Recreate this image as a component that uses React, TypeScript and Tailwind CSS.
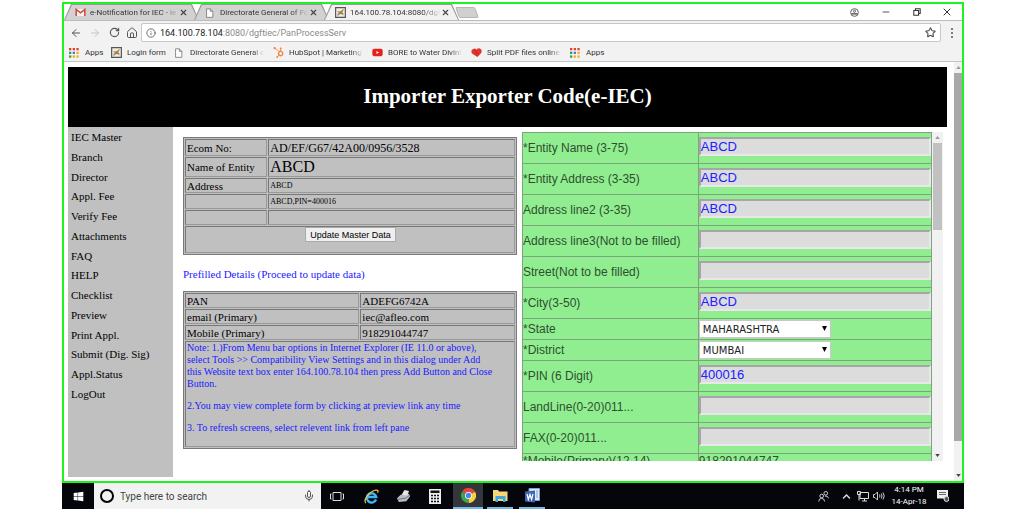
import type { ReactNode } from "react";
import { LuArrowLeft, LuArrowRight, LuRotateCw, LuHouse, LuInfo, LuStar, LuMic, LuX, LuMinus } from "react-icons/lu";
import { FaHubspot, FaYoutube, FaWindows, FaChevronUp } from "react-icons/fa";

const MENU = [
  "IEC Master", "Branch", "Director", "Appl. Fee", "Verify Fee", "Attachments", "FAQ",
  "HELP", "Checklist", "Preview", "Print Appl.", "Submit (Dig. Sig)", "Appl.Status", "LogOut",
];

const CELL = "border border-t-[#777] border-l-[#777] border-r-[#999] border-b-[#999] pl-px text-left font-normal";
const GREY_TABLE = "w-full table-fixed border-separate border-spacing-px border border-[#7a7a7a] bg-[#c0c0c0] text-black";

type Field = { id: string; label: string; value?: string; kind?: "select" };

const FIELDS: Field[] = [
  { id: "name", label: "*Entity Name (3-75)", value: "ABCD" },
  { id: "addr1", label: "*Entity Address (3-35)", value: "ABCD" },
  { id: "addr2", label: "Address line2 (3-35)", value: "ABCD" },
  { id: "addr3", label: "Address line3(Not to be filled)" },
  { id: "street", label: "Street(Not to be filled)" },
  { id: "city", label: "*City(3-50)", value: "ABCD" },
  { id: "state", label: "*State", value: "MAHARASHTRA", kind: "select" },
  { id: "district", label: "*District", value: "MUMBAI", kind: "select" },
  { id: "pin", label: "*PIN (6 Digit)", value: "400016" },
  { id: "landline", label: "LandLine(0-20)011..." },
  { id: "fax", label: "FAX(0-20)011..." },
];

function GmailIcon() {
  return (
    <svg viewBox="0 0 12 10" className="h-[9px] w-[11px]">
      <path d="M1 1h10v8H1z" fill="#f3f3f3" />
      <path d="M1.2 9V1.6L6 5.4l4.8-3.8V9" fill="none" stroke="#d8453a" strokeWidth="1.7" />
    </svg>
  );
}

function PageIcon() {
  return (
    <svg viewBox="0 0 10 12" className="h-[10px] w-[9px]">
      <path d="M1.5 1h4.5l3 3v7.2H1.5z" fill="#fff" stroke="#777" />
      <path d="M6 1v3h3" fill="none" stroke="#777" />
    </svg>
  );
}

function EmblemIcon() {
  return (
    <svg viewBox="0 0 12 12" className="h-[11px] w-[11px]">
      <path d="M.7.7h10.6v10.6H.7z" fill="#eee" stroke="#555" strokeWidth="1.3" />
      <path d="M2 9l2-3-2-2 3 1 5-3-2 4 2 2-4-1z" fill="#b98a2a" />
      <path d="M3 9.5l3-3 3 2" fill="none" stroke="#555" strokeWidth=".8" />
    </svg>
  );
}

function AppsIcon() {
  const colors = ["#e8402f", "#e8402f", "#e8402f", "#2ca24c", "#3f7de0", "#f2b01e", "#2ca24c", "#f2b01e", "#f2b01e"];
  return (
    <svg viewBox="0 0 10 10" className="h-[10px] w-[10px]">
      {colors.map((c, i) => (
        <rect key={i} x={(i % 3) * 3.7} y={Math.floor(i / 3) * 3.7} width="2.3" height="2.3" fill={c} />
      ))}
    </svg>
  );
}

function HeartIcon() {
  return (
    <svg viewBox="0 0 12 10" className="h-[9px] w-[11px]">
      <path d="M7 10L1 6Q-1 2 2.500 1Q5 0 6 2Q8-1 11 1.500Q13 4 10 7z" fill="#e2352f" />
      <path d="M4 2l3 5" stroke="#b3201d" />
    </svg>
  );
}

function Tab({ icon, title, active }: { icon: ReactNode; title: string; active?: boolean }) {
  const shape = "[clip-path:polygon(0_100%,7px_0,calc(100%-7px)_0,100%_100%)]";
  return (
    <div className={`-mr-[5px] w-[135px] bg-[#9a9a9a] px-px pt-px ${shape}`}>
      <div className={`flex h-full items-center px-[10px] ${shape} ${active ? "bg-[#f2f2f2]" : "bg-[#d2d2d2]"}`}>
        <span className="flex w-[15px] shrink-0">{icon}</span>
        <span className="flex-1 text-[8px] leading-3 whitespace-nowrap [mask-image:linear-gradient(to_right,black_80%,transparent)]">
          {title}
        </span>
        <button aria-label="Close tab" className="shrink-0 text-[#444]"><LuX size={9} strokeWidth={3} /></button>
      </div>
    </div>
  );
}

function Bookmark({ icon, label, width }: { icon: ReactNode; label: string; width: string }) {
  return (
    <a href="#" className="flex items-center gap-1">
      <span className="flex w-3 shrink-0">{icon}</span>
      <span className={`whitespace-nowrap ${width}`}>{label}</span>
    </a>
  );
}

function BrowserChrome() {
  const long = "w-[74px] [mask-image:linear-gradient(to_right,black_85%,transparent)]";
  return (
    <header className="font-[Roboto,sans-serif] text-[#333]">
      <div className="flex h-[17px] border-b border-[#bbb] bg-white">
        <Tab icon={<GmailIcon />} title="e-Notification for IEC - ie" />
        <Tab icon={<PageIcon />} title="Directorate General of Fo" />
        <Tab icon={<EmblemIcon />} title="164.100.78.104:8080/dgf" active />
        <button aria-label="New tab" className="mt-[3px] ml-[3px] h-[11px] w-5 -skew-x-[-20deg] rounded-xs border border-[#b5b5b5] bg-[#d0d0d0]" />
        <div className="ml-auto flex items-center text-[#333]">
          <button aria-label="Profile" className="flex w-8 justify-center">
            <svg viewBox="0 0 10 10" className="h-[9px] w-[9px]" fill="none" stroke="#555">
              <circle cx="5" cy="5" r="4.300" />
              <circle cx="5" cy="3.600" r="1.200" />
              <path d="M1.500 6.500h7" strokeWidth="1.600" />
            </svg>
          </button>
          <button aria-label="Minimize" className="flex w-8 justify-center"><LuMinus size={10} /></button>
          <button aria-label="Restore" className="flex w-[30px] justify-center">
            <svg viewBox="0 0 10 10" className="h-2 w-2" fill="none" stroke="#333" strokeWidth="1.300">
              <path d="M1 3h6v6H1zM3 3V1h6v6H7" />
            </svg>
          </button>
          <button aria-label="Close" className="flex w-[30px] justify-center"><LuX size={12} /></button>
        </div>
      </div>
      <div className="flex h-[23px] items-center bg-[#f2f2f2] pl-[3px] text-[#555]">
        <button aria-label="Back" className="flex w-[18px] justify-center"><LuArrowLeft size={12} /></button>
        <button aria-label="Forward" className="flex w-5 justify-center text-[#c4c4c4]"><LuArrowRight size={12} /></button>
        <button aria-label="Reload" className="flex w-[18px] justify-center"><LuRotateCw size={11} strokeWidth={2.5} /></button>
        <button aria-label="Home" className="flex w-[18px] justify-center"><LuHouse size={12} /></button>
        <div className="flex h-[19px] flex-1 items-center rounded-xs border border-[#c8c8c8] bg-white px-1">
          <LuInfo size={10} />
          <span className="ml-1 flex-1 text-[9px] leading-3 text-[#8a8a8a]">
            <span className="text-[#222]">164.100.78.104</span>:8080/dgftiec/PanProcessServ
          </span>
          <button aria-label="Bookmark this page"><LuStar size={11} strokeWidth={2.5} /></button>
        </div>
        <button aria-label="Menu" className="flex w-[21px] flex-col items-center gap-0.5">
          <span className="size-0.5 rounded-full bg-[#555]" />
          <span className="size-0.5 rounded-full bg-[#555]" />
          <span className="size-0.5 rounded-full bg-[#555]" />
        </button>
      </div>
      <nav className="flex h-[18px] items-center gap-[9px] border-b border-[#c4c4c4] bg-[#f2f2f2] pl-[5px] text-[8px] leading-3">
        <Bookmark icon={<AppsIcon />} label="Apps" width="w-[17px]" />
        <Bookmark icon={<EmblemIcon />} label="Login form" width="w-[38px]" />
        <Bookmark icon={<PageIcon />} label="Directorate General o" width={long} />
        <Bookmark icon={<FaHubspot size={11} color="#f0803c" />} label="HubSpot | Marketing" width={long} />
        <Bookmark icon={<FaYoutube size={11} color="#e8201c" />} label="BORE to Water Divini" width={long} />
        <Bookmark icon={<HeartIcon />} label="Split PDF files online." width={long} />
        <Bookmark icon={<AppsIcon />} label="Apps" width="w-[17px]" />
      </nav>
    </header>
  );
}

function Arrow({ up, dark }: { up?: boolean; dark?: boolean }) {
  return (
    <svg viewBox="0 0 6 4" className="my-1 h-[3px] w-[5px] shrink-0" fill={dark ? "#444" : "#999"}>
      <path d={up ? "M0 4L3 0L6 4z" : "M0 0L3 4L6 0z"} />
    </svg>
  );
}

function MasterTables() {
  return (
    <section className="min-w-0 flex-[334] pt-[10px]">
      <table className={`${GREY_TABLE} text-[11px] leading-3`}>
        <colgroup><col className="w-1/4" /><col /></colgroup>
        <tbody>
          <tr className="h-[17px]"><th className={CELL}>Ecom No:</th><td className={`${CELL} text-[12px]`}>AD/EF/G67/42A00/0956/3528</td></tr>
          <tr className="h-5"><th className={CELL}>Name of Entity</th><td className={`${CELL} text-[16px] leading-4`}>ABCD</td></tr>
          <tr className="h-[15px]"><th className={CELL}>Address</th><td className={`${CELL} text-[8px]`}>ABCD</td></tr>
          <tr className="h-[15px]"><td className={CELL} /><td className={`${CELL} text-[8px]`}>ABCD,PIN=400016</td></tr>
          <tr className="h-[15px]"><td className={CELL} /><td className={CELL} /></tr>
          <tr className="h-[27px]">
            <td colSpan={2} className={`${CELL} align-top`}>
              <button className="mx-auto block h-[15px] w-[91px] border border-[#aaa] bg-[#efefef] font-['Liberation_Sans',sans-serif] text-[9px] leading-3 whitespace-nowrap">
                Update Master Data
              </button>
            </td>
          </tr>
        </tbody>
      </table>
      <p className="mt-[14px] mb-3 text-[11px] leading-[10px] text-[#1a1aff]">Prefilled Details (Proceed to update data)</p>
      <table className={`${GREY_TABLE} text-[11px] leading-3`}>
        <colgroup><col className="w-[53%]" /><col /></colgroup>
        <tbody>
          <tr className="h-[15px]"><th className={CELL}>PAN</th><td className={CELL}>ADEFG6742A</td></tr>
          <tr className="h-[15px]"><th className={CELL}>email (Primary)</th><td className={CELL}>iec@afleo.com</td></tr>
          <tr className="h-[15px]"><th className={CELL}>Mobile (Primary)</th><td className={CELL}>918291044747</td></tr>
          <tr className="h-[106px]">
            <td colSpan={2} className={`${CELL} align-top text-[10px] text-[#1a1aff]`}>
              <p>
                Note: 1.)From Menu bar options in Internet Explorer (IE 11.0 or above),<br />
                select Tools &gt;&gt; Compatibility View Settings and in this dialog under Add<br />
                this Website text box enter 164.100.78.104 then press Add Button and Close<br />
                Button.
              </p>
              <p className="mt-[10px]">2.You may view complete form by clicking at preview link any time</p>
              <p className="mt-[10px]">3. To refresh screens, select relevent link from left pane</p>
            </td>
          </tr>
        </tbody>
      </table>
    </section>
  );
}

function FieldControl({ field }: { field: Field }) {
  if (field.kind === "select") {
    return (
      <div className="relative w-[132px]">
        <select id={field.id} className="block h-[18px] w-full appearance-none border border-[#c8c8c8] bg-white pl-[3px] font-['DejaVu_Sans',sans-serif] text-[10px] text-[#222]">
          <option>{field.value}</option>
        </select>
        <svg viewBox="0 0 5 5" className="pointer-events-none absolute top-[6px] right-1 size-[5px]"><path d="M0 0h5L2.500 5z" /></svg>
      </div>
    );
  }
  return (
    <input
      id={field.id}
      defaultValue={field.value}
      className="mb-1 block h-[19px] w-full border-2 border-t-[#a6a6a6] border-r-[#e8e8e8] border-b-[#e8e8e8] border-l-[#a6a6a6] bg-[#dcdcdc] text-[13px] leading-[15px] text-[#2020ff]"
    />
  );
}

function EntityForm() {
  return (
    <section className="mt-[5px] ml-[5px] flex h-[329px] min-w-0 flex-[421] overflow-hidden font-['Liberation_Sans',sans-serif] text-[12px] text-[#2f4f2f]">
      <div className="min-w-0 flex-1">
        <table className="w-full table-fixed border-collapse border border-[#4f6f4f] bg-[#90ee90]">
          <colgroup><col className="w-[43%]" /><col /></colgroup>
          <tbody>
            {FIELDS.map((f) => (
              <tr key={f.id} className={f.kind === "select" ? "h-[21px]" : "h-[31px]"}>
                <th className="border border-[#7da57d] p-0 text-left leading-4 font-normal"><label htmlFor={f.id}>{f.label}</label></th>
                <td className="border border-[#7da57d] p-0"><FieldControl field={f} /></td>
              </tr>
            ))}
            <tr className="h-[15px]">
              <th className="border border-[#7da57d] p-0 text-left leading-[14px] font-normal">*Mobile(Primary)(12,14)</th>
              <td className="border border-[#7da57d] p-0 leading-[14px]">918291044747</td>
            </tr>
          </tbody>
        </table>
      </div>
      <div className="flex w-[11px] flex-col items-center bg-[#f1f1f1]">
        <Arrow up />
        <div className="h-[87px] w-[9px] bg-[#c1c1c1]" />
        <div className="mt-auto"><Arrow dark /></div>
      </div>
    </section>
  );
}

function Taskbar() {
  return (
    <footer className="flex h-[26px] items-center bg-[#04060c] font-[Roboto,sans-serif] text-white">
      <button aria-label="Start" className="flex w-8 justify-center"><FaWindows size={11} /></button>
      <label className="flex h-full w-[227px] items-center gap-[6px] bg-[#f2f2f2] px-[6px]">
        <span className="size-[14px] shrink-0 rounded-full border-2 border-black" />
        <input placeholder="Type here to search" aria-label="Search" className="min-w-0 flex-1 bg-transparent text-[10px] text-[#444] placeholder:text-[#444]" />
        <LuMic size={12} color="#555" />
      </label>
      <div className="flex h-full">
        <button aria-label="Task view" className="flex w-8 items-center justify-center">
          <svg viewBox="0 0 14 9" className="h-[9px] w-[14px]" fill="none" stroke="#ddd"><path d="M3 .5h8v8H3zM1.500 2H.5v5h1M12.500 2h1v5h-1" /></svg>
        </button>
        <button aria-label="Internet Explorer" className="flex w-9 items-center justify-center">
          <svg viewBox="0 0 16 16" className="size-[15px]" fill="none">
            <path d="M12.800 11.200A5 5 0 1 1 13 8.500H4" stroke="#3db8f2" strokeWidth="2.600" />
            <path d="M2 15C-1 12 5 3 12 1.300Q16 .5 14.500 4" stroke="#f4c63a" strokeWidth="1.300" />
          </svg>
        </button>
        <button aria-label="Scanner" className="flex w-7 items-center justify-center">
          <svg viewBox="0 0 16 14" className="h-[13px] w-[15px]">
            <path d="M1 9l4-4 9-1 1 3-4 5-8 1z" fill="#b9bec4" />
            <path d="M6 5l3-5 5 1-2 5z" fill="#e3e6ea" />
            <path d="M2 10l8-1 4-3" stroke="#68717a" fill="none" />
          </svg>
        </button>
        <button aria-label="Calculator" className="flex w-9 items-center justify-center">
          <svg viewBox="0 0 12 15" className="h-[15px] w-3">
            <path d="M0 0h12v15H0z" fill="#eee" />
            <path d="M1.500 1.500h9v2.500h-9z" fill="#111" />
            <path d="M2 6.500h8M2 9.500h8M2 12.500h8" stroke="#111" strokeWidth="1.600" strokeDasharray="2 1" />
          </svg>
        </button>
        <button aria-label="Chrome" className="flex w-[30px] items-center justify-center border-b-2 border-[#76b9ed] bg-[#33363b]">
          <svg viewBox="0 0 16 16" className="size-[15px]">
            <path d="M8 8L1.100 4A8 8 0 0 1 15 4z" fill="#e0463a" />
            <path d="M8 8L15 4A8 8 0 0 1 8 16z" fill="#fbcf3c" />
            <path d="M8 8v8A8 8 0 0 1 1.100 4z" fill="#3da453" />
            <circle cx="8" cy="8" r="3.700" fill="#fff" />
            <circle cx="8" cy="8" r="2.900" fill="#4a86e8" />
          </svg>
        </button>
        <button aria-label="File Explorer" className="ml-1 flex w-[26px] items-center justify-center border-b-2 border-[#76b9ed]">
          <svg viewBox="0 0 15 13" className="h-[13px] w-[15px]">
            <path d="M0 1h5l1 1.500h8.500V12H0z" fill="#f7d774" />
            <path d="M2.500 7h10v6H10v-3H5v3H2.500z" fill="#3fa7e0" />
          </svg>
        </button>
        <button aria-label="Word" className="ml-[6px] flex w-[26px] items-center justify-center border-b-2 border-[#76b9ed]">
          <svg viewBox="0 0 15 15" className="size-[15px]">
            <path d="M4 .5h10.500v12H4z" fill="#dfe9f8" stroke="#7c9fd6" />
            <path d="M11 3h2M11 5h2M11 7h2M11 9h2" stroke="#7c9fd6" />
            <path d="M0 3.500l10-1v12l-10-1z" fill="#3c66b5" />
            <path d="M2 6l1.300 5.500L5 6.500l1.600 5L8 6" fill="none" stroke="#fff" strokeWidth="1.200" />
          </svg>
        </button>
      </div>
      <div className="ml-auto flex items-center pr-[15px]">
        <svg viewBox="0 0 12 12" className="mr-[13px] size-[11px]" fill="none" stroke="#ddd">
          <circle cx="4" cy="5.500" r="2" /><path d="M.8 11.500Q1 8 4 8T7.200 11.500M7.500 5.500Q11 5 11.500 8" /><circle cx="8.500" cy="2.500" r="2" />
        </svg>
        <FaChevronUp size={9} color="#ddd" className="mr-[6px]" />
        <svg viewBox="0 0 12 11" className="mr-1 h-[11px] w-3" fill="none" stroke="#ddd"><path d="M3 1.500h8.500v6H3zM5 10h5M7.500 8v2M.5.500h3v3h-3zM2 4v5.500" /></svg>
        <svg viewBox="0 0 12 10" className="h-[10px] w-3" fill="none" stroke="#ddd" strokeWidth=".9"><path d="M.5 3.500H2L4.500 1v8L2 6.500H.5zM6.500 3.500q1 1.500 0 3M8.200 2.500q1.800 2.500 0 5M10 1.500q2.400 3.500 0 7" /></svg>
        <div className="mx-1 w-[40px] text-center text-[8px] leading-[12px] whitespace-nowrap">
          <div>4:14 PM</div>
          <div>14-Apr-18</div>
        </div>
        <svg viewBox="0 0 12 12" className="ml-1 h-3 w-3"><path d="M0 0h11v8.500H9V11L6.500 8.500H0z" fill="#eee" /><path d="M2 2.500h7M2 4.500h7" stroke="#444" strokeWidth=".8" /><circle cx="9.500" cy="9" r="2.500" fill="#555" stroke="#ddd" /></svg>
      </div>
    </footer>
  );
}

export default function App() {
  return (
    <div className="bg-white pt-0.5 pr-[60px] pl-[62px]">
      <div className="border-2 border-[#1cf51c]">
        <BrowserChrome />
        <div className="flex">
          <main className="min-w-0 flex-1 pt-[5px] pr-[7px] pb-1 pl-1 font-['Liberation_Serif',serif]">
            <h1 className="flex h-[60px] items-center justify-center bg-black text-[21px] font-bold text-white">
              Importer Exporter Code(e-IEC)
            </h1>
            <div className="flex pr-1">
              <nav className="mr-[10px] h-[350px] w-[105px] shrink-0 bg-[#c0c0c0] pt-1 pl-[3px]">
                <ul className="flex h-[269px] flex-col justify-between text-[11px] leading-3">
                  {MENU.map((item) => (
                    <li key={item}><a href="#" className="text-black">{item}</a></li>
                  ))}
                </ul>
              </nav>
              <MasterTables />
              <EntityForm />
            </div>
          </main>
          <div className="flex w-2 flex-col items-center bg-[#f1f1f1]">
            <Arrow up />
            <div className="h-[368px] w-full bg-[#a8a8a8]" />
            <div className="mt-auto"><Arrow dark /></div>
          </div>
        </div>
      </div>
      <Taskbar />
    </div>
  );
}
